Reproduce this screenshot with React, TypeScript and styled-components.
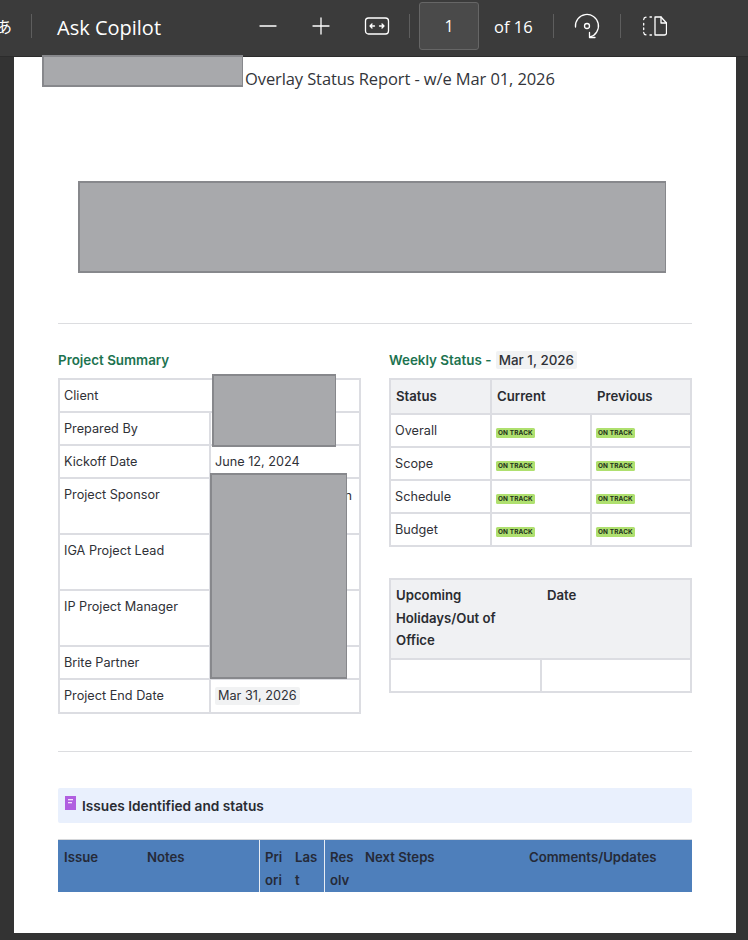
import React from "react";
import styled, { createGlobalStyle } from "styled-components";

const GlobalStyle = createGlobalStyle`
  html, body {
    margin: 0;
    padding: 0;
    background: #333333;
  }
  * {
    box-sizing: border-box;
  }
`;

const Viewer = styled.div`
  width: 748px;
  height: 940px;
  overflow: hidden;
  background: #333333;
  display: flex;
  flex-direction: column;
`;

const Toolbar = styled.div`
  height: 57px;
  flex: none;
  background: #3b3b3b;
  border-bottom: 1px solid #2c2c2c;
  padding-bottom: 4px;
  color: #ffffff;
  font-family: "Open Sans", "Noto Sans CJK JP", sans-serif;
  display: flex;
  align-items: center;
`;

const ReadAloud = styled.span`
  width: 35px;
  margin-left: -4px;
  font-size: 16px;
  font-family: "Noto Sans CJK JP", sans-serif;
`;

const Divider = styled.span`
  width: 1px;
  height: 24px;
  background: #5e5e5e;
  flex: none;
`;

const Copilot = styled.span`
  font-size: 20px;
  margin: 3px 0 0 25px;
  width: 157px;
  white-space: nowrap;
`;

const IconButton = styled.button<{ $width: number; $left?: number }>`
  width: ${(p) => p.$width}px;
  height: 36px;
  margin-left: ${(p) => p.$left ?? 0}px;
  padding: 0;
  border: 0;
  background: none;
  color: #ffffff;
  display: flex;
  align-items: center;
  justify-content: center;
  flex: none;
`;

const PageBox = styled.div`
  width: 60px;
  height: 48px;
  margin-left: 9px;
  background: #4a4a4a;
  border: 1px solid #666666;
  border-radius: 3px;
  display: flex;
  align-items: center;
  justify-content: center;
  font-size: 16px;
`;

const PageCount = styled.span`
  font-size: 16.5px;
  margin-left: 15px;
  width: 59px;
  white-space: nowrap;
`;

const Stage = styled.div`
  flex: 1;
  padding: 0 12px 7px 14px;
  min-height: 0;
`;

const Page = styled.div`
  position: relative;
  height: 100%;
  background: #ffffff;
  padding: 10px 44px 0;
  color: #2f3137;
  font-family: Inter, "Liberation Sans", sans-serif;
`;

const Title = styled.h1`
  margin: 0;
  padding-left: 187px;
  font-size: 16.5px;
  line-height: 24px;
  font-weight: 400;
  font-family: "Open Sans", sans-serif;
  letter-spacing: -0.1px;
  color: #33353a;
`;

const LogoStrip = styled.div`
  height: 92px;
  margin-top: 68px;
`;

const Rule = styled.hr<{ $top: number }>`
  border: 0;
  height: 1px;
  background: #dcdde0;
  margin: ${(p) => p.$top}px 0 0;
`;

const Columns = styled.div`
  display: grid;
  grid-template-columns: 303px 303px;
  column-gap: 28px;
  margin-top: 20px;
`;

const Heading = styled.div`
  height: 34px;
  font-size: 13.4px;
  line-height: 32px;
  font-weight: 600;
  color: #1d7350;
  white-space: nowrap;
`;

const DatePill = styled.span<{ $large?: boolean }>`
  display: inline-block;
  background: #f1f2f3;
  color: #2f3137;
  border-radius: 2px;
  padding: 0 3px;
  line-height: 18px;
  margin-left: ${(p) => (p.$large ? 1 : 0)}px;
  font-weight: ${(p) => (p.$large ? 500 : 400)};
`;

const Table = styled.table`
  width: 100%;
  border-collapse: collapse;
  table-layout: fixed;
  font-size: 12.7px;
  border: 2px solid #dcdde2;
`;

const Cell = styled.td<{ $height?: number; $noRight?: boolean; $left?: number }>`
  border: 2px solid #dcdde2;
  ${(p) => (p.$noRight ? "border-right: 0;" : "")}
  height: ${(p) => p.$height ?? 33}px;
  padding: 7px 4px 0 ${(p) => p.$left ?? 4}px;
  vertical-align: top;
  line-height: 18px;
  color: #2f3137;
  background: #ffffff;
`;

const ValueCell = styled(Cell)<{ $joined?: boolean }>`
  position: relative;
  ${(p) => (p.$joined ? "border-left: 0;" : "")}
`;

const HeadCell = styled.th<{ $height?: number; $noLeft?: boolean; $noRight?: boolean; $stack?: boolean }>`
  height: ${(p) => p.$height ?? 35}px;
  background: #f0f1f3;
  border: 2px solid #dcdde2;
  ${(p) => (p.$noLeft ? "border-left: 0;" : "")}
  ${(p) => (p.$noRight ? "border-right: 0;" : "")}
  padding: ${(p) => (p.$stack ? 4 : 6)}px ${(p) => (p.$stack ? 40 : 4)}px 0 ${(p) => (p.$noLeft ? 6 : 5)}px;
  text-align: left;
  vertical-align: top;
  font-size: 13.2px;
  font-weight: 600;
  line-height: ${(p) => (p.$stack ? "22.5px" : "20px")};
  color: #2a2c31;
`;

const Tag = styled.span`
  display: inline-block;
  background: #afe06f;
  color: #22301a;
  border-radius: 1.5px;
  padding: 0 2px;
  font-size: 6.4px;
  line-height: 10px;
  font-weight: 700;
  letter-spacing: 0.15px;
  vertical-align: top;
  margin-top: 6px;
  white-space: nowrap;
`;

const HolidayWrap = styled.div`
  margin-top: 31px;
`;

const StickOut = styled.span`
  position: absolute;
  top: 8px;
  right: 7px;
`;

const Callout = styled.div`
  margin-top: 36px;
  height: 35px;
  background: #e9f0fd;
  border-radius: 2px;
  display: flex;
  align-items: center;
  padding-left: 7px;
  gap: 6px;
  font-size: 13.7px;
  font-weight: 600;
  color: #2a2c33;
`;

const IssueHead = styled.div`
  margin-top: 16px;
  height: 53px;
  background: #4e7fbb;
  border-top: 1px solid #d5d7da;
  display: grid;
  grid-template-columns: 83px 119px 31px 34px 35px 164px 1fr;
  font-size: 13.2px;
  font-weight: 600;
  line-height: 23px;
  color: #252a38;
`;

const IssueCell = styled.div<{ $rule?: boolean; $left?: number; $right?: number }>`
  padding: 6px ${(p) => p.$right ?? 0}px 0 ${(p) => p.$left ?? 5}px;
  word-break: break-all;
  white-space: normal;
  ${(p) => (p.$rule ? "border-right: 1px solid #e8edf4;" : "")}
`;

const Redaction = styled.div<{ $x: number; $y: number; $w: number; $h: number }>`
  position: absolute;
  left: ${(p) => p.$x}px;
  top: ${(p) => p.$y}px;
  width: ${(p) => p.$w}px;
  height: ${(p) => p.$h}px;
  background: #a8a9ac;
  border: 1px solid #87888c;
  border-width: 2px 1px 2px 2px;
`;

const summary = [
  { label: "Client", height: 33, joined: true },
  { label: "Prepared By", height: 33 },
  { label: "Kickoff Date", height: 33, value: "June 12, 2024" },
  { label: "Project Sponsor", height: 56, stick: "h" },
  { label: "IGA Project Lead", height: 56 },
  { label: "IP Project Manager", height: 56 },
  { label: "Brite Partner", height: 33 },
  { label: "Project End Date", height: 34, pill: "Mar 31, 2026" },
];

const statusRows = ["Overall", "Scope", "Schedule", "Budget"];

function ToolIcon({ children, size = 24 }: { children: React.ReactNode; size?: number }) {
  return (
    <svg
      width={size}
      height={size}
      viewBox={`0 0 ${size} ${size}`}
      fill="none"
      stroke="currentColor"
      strokeWidth="1.3"
      strokeLinecap="round"
      strokeLinejoin="round"
    >
      {children}
    </svg>
  );
}

function NotebookIcon() {
  return (
    <svg width="11" height="14" viewBox="0 0 11 14" style={{ marginTop: -5 }}>
      <rect width="11" height="14" fill="#b05fe0" />
      <rect x="3" y="3" width="5" height="1.3" fill="#f3e3fb" />
      <rect x="3" y="6" width="4" height="1.3" fill="#f3e3fb" />
    </svg>
  );
}

export default function App() {
  return (
    <>
      <GlobalStyle />
      <Viewer>
        <Toolbar>
          <ReadAloud>あ</ReadAloud>
          <Divider />
          <Copilot>Ask Copilot</Copilot>
          <IconButton $width={64} $left={22} aria-label="Zoom out">
            <ToolIcon><path d="M4 12h16" /></ToolIcon>
          </IconButton>
          <IconButton $width={42} aria-label="Zoom in">
            <ToolIcon><path d="M4 12h16M12 4v16" /></ToolIcon>
          </IconButton>
          <IconButton $width={46} $left={12} aria-label="Fit to width">
            <ToolIcon size={26}>
              <rect x="1.5" y="5" width="23" height="16" rx="3" />
              <path d="M10.500 13H6M8 11l-2 2 2 2M15.500 13H20M18 11l2 2-2 2" />
            </ToolIcon>
          </IconButton>
          <Divider style={{ marginLeft: 9 }} />
          <PageBox>1</PageBox>
          <PageCount>of 16</PageCount>
          <Divider />
          <IconButton $width={66} aria-label="Rotate">
            <ToolIcon size={28}>
              <path d="M2.500 15A11.500 11.500 0 1 1 17 25" />
              <path d="M16.500 20.500V25.500H22" />
              <circle cx="14" cy="14" r="2.500" />
            </ToolIcon>
          </IconButton>
          <Divider />
          <IconButton $width={67} aria-label="Page view">
            <ToolIcon>
              <path d="M12 3h6l5.500 6v10a2 2 0 0 1-2 2H12z" />
              <path d="M18 3v6h5.500" />
              <path d="M8.500 3H7M3 3.200A2.500 2.500 0 0 0 .700 5.500M.700 9.500v1.500M.700 14v1.500M.700 18.500A2.500 2.500 0 0 0 3 20.800M7 21h1.500" />
            </ToolIcon>
          </IconButton>
        </Toolbar>
        <Stage>
          <Page>
            <Title>Overlay Status Report - w/e Mar 01, 2026</Title>
            <LogoStrip />
            <Rule $top={72} />
            <Columns>
              <div>
                <Heading>Project Summary</Heading>
                <Table>
                  <colgroup>
                    <col style={{ width: 151 }} />
                    <col />
                  </colgroup>
                  <tbody>
                    {summary.map((row) => (
                      <tr key={row.label}>
                        <Cell $height={row.height} $noRight={row.joined}>{row.label}</Cell>
                        <ValueCell $height={row.height} $joined={row.joined}>
                          {row.value}
                          {row.pill && <DatePill>{row.pill}</DatePill>}
                          {row.stick && <StickOut>{row.stick}</StickOut>}
                        </ValueCell>
                      </tr>
                    ))}
                  </tbody>
                </Table>
              </div>
              <div>
                <Heading>
                  Weekly Status - <DatePill $large>Mar 1, 2026</DatePill>
                </Heading>
                <Table>
                  <colgroup>
                    <col style={{ width: 101 }} />
                    <col style={{ width: 100 }} />
                    <col />
                  </colgroup>
                  <thead>
                    <tr>
                      <HeadCell>Status</HeadCell>
                      <HeadCell $noRight>Current</HeadCell>
                      <HeadCell $noLeft>Previous</HeadCell>
                    </tr>
                  </thead>
                  <tbody>
                    {statusRows.map((name) => (
                      <tr key={name}>
                        <Cell>{name}</Cell>
                        <Cell><Tag>ON TRACK</Tag></Cell>
                        <Cell><Tag>ON TRACK</Tag></Cell>
                      </tr>
                    ))}
                  </tbody>
                </Table>
                <HolidayWrap>
                  <Table>
                    <colgroup>
                      <col style={{ width: 151 }} />
                      <col />
                    </colgroup>
                    <thead>
                      <tr>
                        <HeadCell $height={80} $stack $noRight>
                          Upcoming Holidays/Out of Office
                        </HeadCell>
                        <HeadCell $height={80} $stack $noLeft>Date</HeadCell>
                      </tr>
                    </thead>
                    <tbody>
                      <tr>
                        <Cell />
                        <Cell />
                      </tr>
                    </tbody>
                  </Table>
                </HolidayWrap>
              </div>
            </Columns>
            <Rule $top={37} />
            <Callout>
              <NotebookIcon />
              Issues Identified and status
            </Callout>
            <IssueHead>
              <IssueCell $left={6}>Issue</IssueCell>
              <IssueCell $left={6} $rule>Notes</IssueCell>
              <IssueCell $right={4}>Pri ori</IssueCell>
              <IssueCell $left={4} $right={4} $rule>Las t</IssueCell>
              <IssueCell $right={6}>Res olv</IssueCell>
              <IssueCell>Next Steps</IssueCell>
              <IssueCell>Comments/Updates</IssueCell>
            </IssueHead>
            <Redaction $x={28} $y={-2} $w={201} $h={32} />
            <Redaction $x={64} $y={124} $w={588} $h={92} />
            <Redaction $x={198} $y={317} $w={124} $h={73} />
            <Redaction $x={196} $y={416} $w={137} $h={206} />
          </Page>
        </Stage>
      </Viewer>
    </>
  );
}
